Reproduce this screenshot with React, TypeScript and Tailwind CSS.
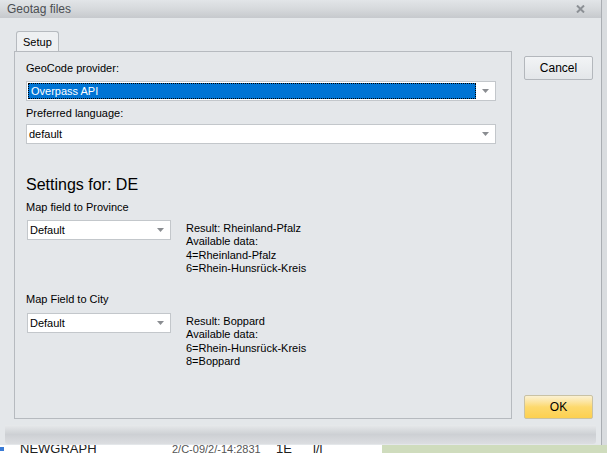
import React from "react";

const ui = { fontFamily: '"Liberation Sans", Arial, sans-serif' };

function Arrow() {
  return (
    <svg width="7" height="4" viewBox="0 0 7 4" className="shrink-0">
      <path d="M0 0h7L3.5 4z" fill="#8a8d91" />
    </svg>
  );
}

function Combo({
  value,
  width,
  selected = false,
}: {
  value: string;
  width: string;
  selected?: boolean;
}) {
  return (
    <div
      className={
        "flex h-[20px] items-center border border-[#c3c7cb] bg-white " + width
      }
    >
      {selected ? (
        <div className="ml-[1px] flex h-[16px] flex-1 items-center border border-dotted border-black bg-[#0074d4] pl-[2px] text-white">
          {value}
        </div>
      ) : (
        <div className="flex-1 pl-[2px]">{value}</div>
      )}
      <div className="flex w-[19px] justify-center">
        <Arrow />
      </div>
    </div>
  );
}

function ResultBlock({ lines }: { lines: string[] }) {
  return (
    <div className="pt-[2px] leading-[13.3px]">
      {lines.map((l) => (
        <div key={l}>{l}</div>
      ))}
    </div>
  );
}

export default function App() {
  return (
    <div
      className="flex h-[453px] w-[607px] flex-col overflow-hidden bg-[#d9dcdf] text-[11px] text-black"
      style={ui}
    >
      <div className="flex h-[445px] w-[602px] flex-col border-r border-[#a9adb2] bg-[#e4e7ea]">
        {/* title bar */}
        <div className="flex h-[18px] items-center justify-between bg-gradient-to-b from-[#e2e5e8] via-[#d6d9dc] to-[#c6c9cd] pl-[7px] pr-[16px]">
          <span className="text-[12px] text-[#4b4e52]">Geotag files</span>
          <svg width="9" height="8" viewBox="0 0 9 8">
            <path d="M1 0.5l7 7M8 0.5l-7 7" stroke="#8c9095" strokeWidth="2" />
          </svg>
        </div>

        {/* body */}
        <div className="flex flex-1 pl-[14px] pt-[13px]">
          <div className="flex w-[498px] flex-col">
            <div className="flex">
              <div className="ml-[2px] flex h-[20px] items-center rounded-t-[3px] border border-b-0 border-[#b6babf] bg-[#eef0f2] px-[6px] pt-[1px]">
                Setup
              </div>
            </div>
            <div className="h-[368px] border border-[#b6babf] bg-[#e4e7ea] pl-[11px] pr-[15px] pt-[10px]">
              <div className="leading-[13px]">GeoCode provider:</div>
              <div className="mt-[6px]">
                <Combo value="Overpass API" width="w-[470px]" selected />
              </div>
              <div className="mt-[6px] leading-[13px]">Preferred language:</div>
              <div className="mt-[4px]">
                <Combo value="default" width="w-[470px]" />
              </div>

              <div className="mt-[31px] text-[16px] leading-[20px]">
                Settings for: DE
              </div>
              <div className="mt-[6px] leading-[13px]">Map field to Province</div>
              <div className="mt-[6px] flex gap-[15px] pl-[1px]">
                <Combo value="Default" width="w-[144px]" />
                <ResultBlock
                  lines={[
                    "Result: Rheinland-Pfalz",
                    "Available data:",
                    "4=Rheinland-Pfalz",
                    "6=Rhein-Hunsrück-Kreis",
                  ]}
                />
              </div>

              <div className="mt-[18px] leading-[13px]">Map Field to City</div>
              <div className="mt-[7px] flex gap-[15px] pl-[1px]">
                <Combo value="Default" width="w-[144px]" />
                <ResultBlock
                  lines={[
                    "Result: Boppard",
                    "Available data:",
                    "6=Rhein-Hunsrück-Kreis",
                    "8=Boppard",
                  ]}
                />
              </div>
            </div>
          </div>

          <div className="ml-[12px] flex w-[69px] flex-col justify-between pt-[25px]">
            <button className="flex h-[24px] items-center justify-center rounded-[2px] border border-[#b3b7bc] bg-gradient-to-b from-[#f2f4f6] to-[#e3e6e9] text-[12px]">
              Cancel
            </button>
            <button className="flex h-[24px] items-center justify-center rounded-[2px] border border-[#c9c2a4] bg-gradient-to-b from-[#fbf1d2] via-[#fdd96c] to-[#fdd04f] text-[12px]">
              OK
            </button>
          </div>
        </div>

        {/* bottom bar */}
        <div className="mx-[5px] mb-[1px] mt-[6px] h-[20px] rounded-b-[3px] bg-gradient-to-b from-[#e7e9eb] via-[#cdd0d4] to-[#dcdee1]" />
      </div>

      {/* app underneath */}
      <div className="flex h-[8px] overflow-hidden">
        <div className="flex w-[382px] items-start whitespace-nowrap bg-white text-[13px] leading-[14px] text-[#202020]">
          <div className="mt-[2px] h-[4px] w-[4px] shrink-0 bg-[#3a7bd5]" />
          <span className="-mt-[3px] ml-[16px] w-[152px] shrink-0">NEWGRAPH</span>
          <span className="-mt-[3px] w-[104px] shrink-0 text-[11px] text-[#555]">2/C-09/2/-14:2831</span>
          <span className="-mt-[3px] w-[37px] shrink-0">1E</span>
          <span className="-mt-[3px] shrink-0">l/l</span>
        </div>
        <div className="flex-1 bg-[#cfdcbd]" />
      </div>
    </div>
  );
}
